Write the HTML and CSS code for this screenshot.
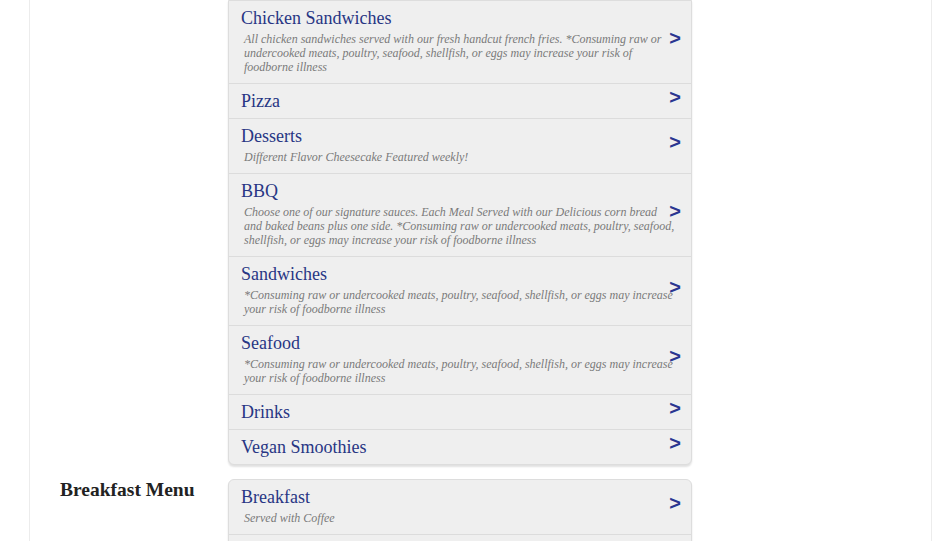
FILE: index.html
```html
<!DOCTYPE html>
<html>
<head>
<meta charset="utf-8">
<link rel="stylesheet" href="styles.css">
</head>
<body>
<div class="page">
  <section class="menu-section">
    <div class="menu-label"></div>
    <div class="card card-first">
      <a class="item">
        <div class="item-title">Chicken Sandwiches</div>
        <div class="item-desc">All chicken sandwiches served with our fresh handcut french fries. *Consuming raw or undercooked meats, poultry, seafood, shellfish, or eggs may increase your risk of foodborne illness</div>
        <span class="arrow">&gt;</span>
      </a>
      <a class="item">
        <div class="item-title">Pizza</div>
        <span class="arrow">&gt;</span>
      </a>
      <a class="item">
        <div class="item-title">Desserts</div>
        <div class="item-desc">Different Flavor Cheesecake Featured weekly!</div>
        <span class="arrow">&gt;</span>
      </a>
      <a class="item">
        <div class="item-title">BBQ</div>
        <div class="item-desc">Choose one of our signature sauces. Each Meal Served with our Delicious corn bread and baked beans plus one side. *Consuming raw or undercooked meats, poultry, seafood, shellfish, or eggs may increase your risk of foodborne illness</div>
        <span class="arrow">&gt;</span>
      </a>
      <a class="item">
        <div class="item-title">Sandwiches</div>
        <div class="item-desc">*Consuming raw or undercooked meats, poultry, seafood, shellfish, or eggs may increase your risk of foodborne illness</div>
        <span class="arrow">&gt;</span>
      </a>
      <a class="item">
        <div class="item-title">Seafood</div>
        <div class="item-desc">*Consuming raw or undercooked meats, poultry, seafood, shellfish, or eggs may increase your risk of foodborne illness</div>
        <span class="arrow">&gt;</span>
      </a>
      <a class="item">
        <div class="item-title">Drinks</div>
        <span class="arrow">&gt;</span>
      </a>
      <a class="item">
        <div class="item-title">Vegan Smoothies</div>
        <span class="arrow">&gt;</span>
      </a>
    </div>
  </section>
  <section class="menu-section">
    <h2 class="menu-label">Breakfast Menu</h2>
    <div class="card">
      <a class="item">
        <div class="item-title">Breakfast</div>
        <div class="item-desc">Served with Coffee</div>
        <span class="arrow">&gt;</span>
      </a>
      <a class="item">
        <div class="item-title">Breakfast Sides</div>
        <span class="arrow">&gt;</span>
      </a>
    </div>
  </section>
</div>
</body>
</html>
```
FILE: styles.css
```css
html, body {
  margin: 0;
  padding: 0;
  background: #ffffff;
  font-family: "Liberation Serif", "Times New Roman", serif;
  overflow: hidden;
}

.page {
  margin: 0 13px 0 29px;
  border-left: 1px solid #ececec;
  border-right: 1px solid #ececec;
  min-height: 541px;
  box-sizing: border-box;
}

.menu-section {
  display: grid;
  grid-template-columns: 198px 464px;
  margin-bottom: 14px;
}

.menu-label {
  margin: 0;
  padding-left: 30px;
  font-size: 19.5px;
  line-height: 22px;
  font-weight: bold;
  color: #222222;
}

.card {
  background: #efefef;
  border: 1px solid #dddddd;
  border-radius: 6px;
  box-shadow: 0 2px 2px rgba(0, 0, 0, 0.12);
  overflow: hidden;
}

.card-first {
  border-top-left-radius: 0;
  border-top-right-radius: 0;
}

.item {
  display: block;
  position: relative;
  padding: 7px 14px 7px 12px;
  border-bottom: 1px solid #dcdcdc;
  text-decoration: none;
}

.item:last-child {
  border-bottom: none;
}

.item-title {
  font-size: 18px;
  line-height: 20px;
  color: #283684;
}

.item-desc {
  margin-top: 4px;
  padding: 0 0 2px 3px;
  font-size: 12px;
  line-height: 14px;
  font-style: italic;
  color: #7a7a7a;
}

.arrow {
  position: absolute;
  right: 10px;
  top: 50%;
  transform: translateY(-50%);
  margin-top: -4px;
  font-family: "Liberation Sans", Arial, sans-serif;
  font-weight: bold;
  font-size: 20px;
  line-height: 20px;
  color: #2a3590;
}
```
